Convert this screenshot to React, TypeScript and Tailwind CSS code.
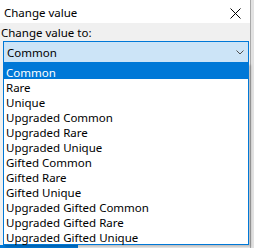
const options = [
  'Common',
  'Rare',
  'Unique',
  'Upgraded Common',
  'Upgraded Rare',
  'Upgraded Unique',
  'Gifted Common',
  'Gifted Rare',
  'Gifted Unique',
  'Upgraded Gifted Common',
  'Upgraded Gifted Rare',
  'Upgraded Gifted Unique',
]

function CloseIcon() {
  return (
    <svg width="11" height="11" viewBox="0 0 11 11" className="text-black">
      <path d="M0.5 0.5 L10.5 10.5 M10.5 0.5 L0.5 10.5" stroke="currentColor" strokeWidth="1" fill="none" />
    </svg>
  )
}

function Chevron() {
  return (
    <svg width="8" height="5" viewBox="0 0 8 5" className="text-[#505050]">
      <path d="M0.5 0.5 L4 4 L7.5 0.5" stroke="currentColor" strokeWidth="1" fill="none" />
    </svg>
  )
}

export default function App() {
  const selected = 'Common'

  return (
    <div
      className="relative w-[254px] h-[248px] overflow-hidden bg-[#e2e2e2] text-[11.5px] text-black"
      style={{ fontFamily: '"Noto Sans", "Open Sans", sans-serif' }}
    >
      <div className="flex flex-col w-[251px] h-full border-r border-[#a8a8a8] bg-[#f0f0f0]">
        {/* title bar */}
        <div className="flex justify-between h-[23px] bg-white">
          <span className="pl-[4px] pt-[4px] leading-[17px]">Change value</span>
          <span className="pt-[8px] pr-[9px]">
            <CloseIcon />
          </span>
        </div>

        {/* body */}
        <div className="flex flex-col flex-1">
          <label className="h-[18px] pl-[1px] pt-[2px] leading-[16px]">Change value to:</label>
          <div className="flex items-center justify-between ml-[3px] w-[246px] h-[22px] border border-[#0078d7] bg-[#cce4f7] pl-[3px] pr-[4px]">
            <span className="leading-[17px] pt-[1px]">{selected}</span>
            <Chevron />
          </div>
          <div className="flex-1" />
          <div className="h-[3px] w-[78px] bg-[#0078d7]" />
        </div>
      </div>

      {/* open dropdown list */}
      <ul className="absolute left-[3px] top-[63px] w-[246px] border border-[#0078d7] bg-white shadow-[2px_2px_2px_rgba(0,0,0,0.2)]">
        {options.map((opt) => (
          <li
            key={opt}
            className={
              opt === selected
                ? 'h-[15px] pl-[2px] leading-[17px] bg-[#0078d7] text-white'
                : 'h-[15px] pl-[2px] leading-[17px]'
            }
          >
            {opt}
          </li>
        ))}
      </ul>
    </div>
  )
}
